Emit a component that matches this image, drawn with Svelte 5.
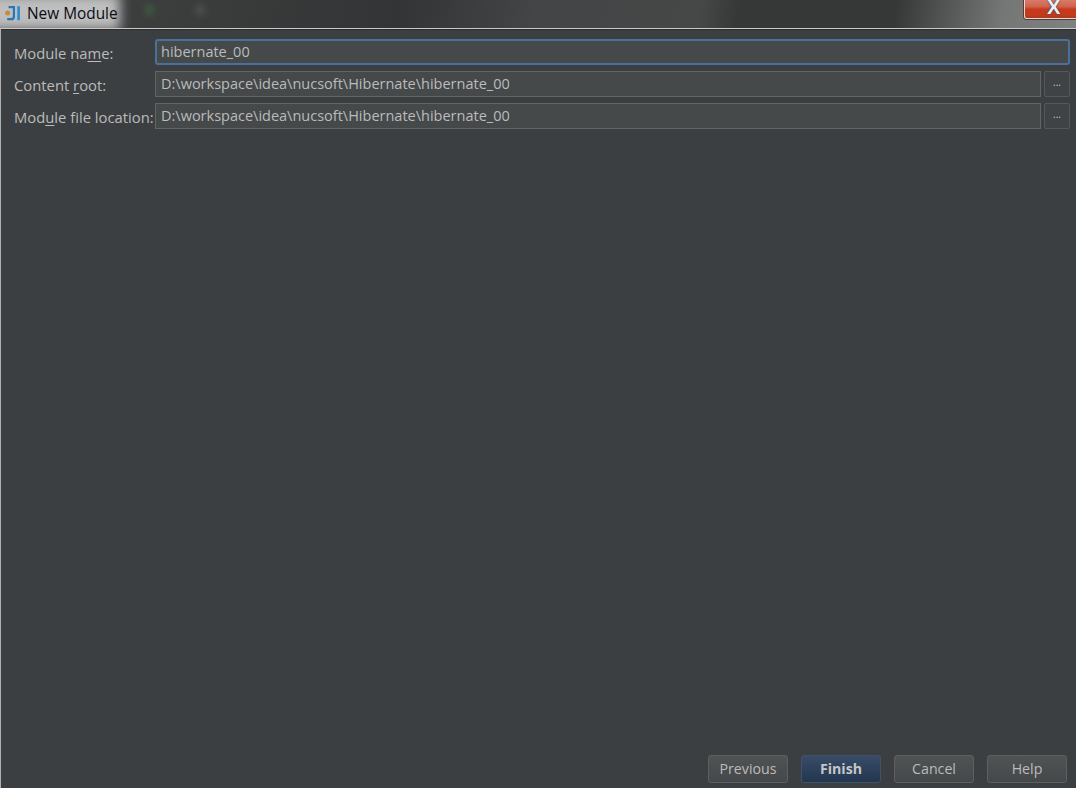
<script>
  const rows = [
    { pre: 'Content ', key: 'r', post: 'oot:', value: 'D:\\workspace\\idea\\nucsoft\\Hibernate\\hibernate_00' },
    { pre: 'Mod', key: 'u', post: 'le file location:', value: 'D:\\workspace\\idea\\nucsoft\\Hibernate\\hibernate_00' }
  ];
  const buttons = ['Previous', 'Finish', 'Cancel', 'Help'];
</script>

<div class="window">
  <header class="titlebar">
    <div class="title-glow">
      <svg class="logo" width="16" height="16" viewBox="0 0 16 16" aria-hidden="true">
        <circle cx="2.6" cy="8" r="2.5" fill="#c98a3c"/>
        <path d="M3.5 2.2h5.4v9.2c0 1.8-1 2.8-2.8 2.8H2.2" fill="none" stroke="#2477b8" stroke-width="2.2"/>
        <path d="M13.6 1.2v14" stroke="#2a8ad0" stroke-width="2.6"/>
      </svg>
      <span class="title">New Module</span>
    </div>
    <div class="ghost green"></div>
    <div class="ghost grey"></div>
    <div class="close"><span>X</span></div>
  </header>

  <main class="body">
    <form class="form">
      <div class="row">
        <span class="label">Module na<u>m</u>e:</span>
        <div class="field focused">hibernate_00</div>
      </div>
      {#each rows as r}
        <div class="row">
          <span class="label">{r.pre}<u>{r.key}</u>{r.post}</span>
          <div class="field">{r.value}</div>
          <div class="browse">...</div>
        </div>
      {/each}
    </form>

    <footer class="actions">
      {#each buttons as b}
        <div class="btn" class:primary={b === 'Finish'}>{b}</div>
      {/each}
    </footer>
  </main>
</div>

<style>
  :global(body) {
    margin: 0;
    background: #3c3f41;
  }
  .window {
    width: 1076px;
    height: 788px;
    display: flex;
    flex-direction: column;
    overflow: hidden;
    font-family: "Open Sans", "Noto Sans", sans-serif;
  }
  .titlebar {
    position: relative;
    height: 28px;
    flex: none;
    background: linear-gradient(100deg, #3f4142 0%, #3a3c3c 20%, #333435 37%, #444546 50%, #464747 65%, #363737 68.5%, #363737 83%, #5c5d5d 89%, #757676 93%, #808181 100%);
    display: flex;
    overflow: hidden;
  }
  .title-glow {
    position: relative;
    display: flex;
    align-items: center;
    gap: 6px;
    height: 28px;
    box-sizing: border-box;
    padding: 0 0 2px 5px;
  }
  .title-glow::before {
    content: "";
    position: absolute;
    left: -12px;
    top: -6px;
    width: 132px;
    height: 36px;
    background: #bfbfbf;
    filter: blur(6px);
  }
  .logo {
    position: relative;
    flex: none;
  }
  .title {
    position: relative;
    font-family: "Open Sans", sans-serif;
    font-size: 15.4px;
    color: #0a0d14;
  }
  .ghost {
    position: absolute;
    top: 4px;
    border-radius: 50%;
    filter: blur(3px);
  }
  .ghost.green {
    left: 145px;
    width: 9px;
    height: 12px;
    background: #3f5a41;
  }
  .ghost.grey {
    left: 194px;
    width: 12px;
    height: 12px;
    background: #4a4d4b;
  }
  .close {
    position: absolute;
    left: 1024px;
    top: 0;
    width: 60px;
    height: 19px;
    box-sizing: border-box;
    border: 1px solid #e8d8d4;
    border-top: 0;
    border-radius: 0 0 3px 3px;
    background: linear-gradient(#d97b68 0%, #cf6650 35%, #c8391a 52%, #c23a1c 85%, #a63a22 100%);
    box-shadow: 0 0 0 1px #5b3a35;
    padding-left: 22px;
  }
  .close span {
    display: block;
    font-family: "Liberation Sans", sans-serif;
    font-weight: 700;
    font-size: 20px;
    line-height: 14px;
    color: #eef0f4;
    text-shadow: 0 0 1px #3b4660, 0 0 2px #3b4660;
  }
  .body {
    flex: 1;
    display: flex;
    flex-direction: column;
    justify-content: space-between;
    background: #3c3f41;
    border-top: 1px solid #c9c9c9;
    border-left: 1px solid #b0b0b0;
    box-shadow: inset 0 1px 0 #2c2d2e;
    padding: 10px 6px 5px 13px;
    min-height: 0;
  }
  .form {
    display: flex;
    flex-direction: column;
    gap: 6px;
  }
  .row {
    display: flex;
    align-items: stretch;
    height: 26px;
    gap: 3px;
  }
  .label {
    width: 138px;
    flex: none;
    font-size: 14.8px;
    line-height: 28px;
    color: #bbbbbb;
    white-space: nowrap;
  }
  .label u {
    text-underline-offset: 2px;
  }
  .field {
    flex: 1;
    min-width: 0;
    box-sizing: border-box;
    background: #45494a;
    border: 1px solid #646464;
    font-size: 14.5px;
    line-height: 24px;
    padding-left: 5px;
    color: #bbbbbb;
  }
  .field.focused {
    border: 2px solid #4a709c;
    border-radius: 3px;
    padding-left: 4px;
    line-height: 22px;
  }
  .browse {
    width: 26px;
    flex: none;
    box-sizing: border-box;
    border: 1px solid #555859;
    border-radius: 2px;
    background: #3f4345;
    color: #cccccc;
    font-size: 10px;
    line-height: 21px;
    text-align: center;
  }
  .actions {
    display: flex;
    justify-content: flex-end;
    gap: 13px;
    padding-right: 3px;
  }
  .btn {
    width: 80px;
    height: 28px;
    box-sizing: border-box;
    border: 1px solid #5e6060;
    border-radius: 3px;
    background: linear-gradient(#505354, #45484a);
    color: #bbbbbb;
    font-size: 14.2px;
    line-height: 26px;
    text-align: center;
  }
  .btn.primary {
    border-color: #3f5269;
    background: linear-gradient(#384c67, #233650);
    font-weight: 700;
    color: #c6c6c6;
  }
</style>
